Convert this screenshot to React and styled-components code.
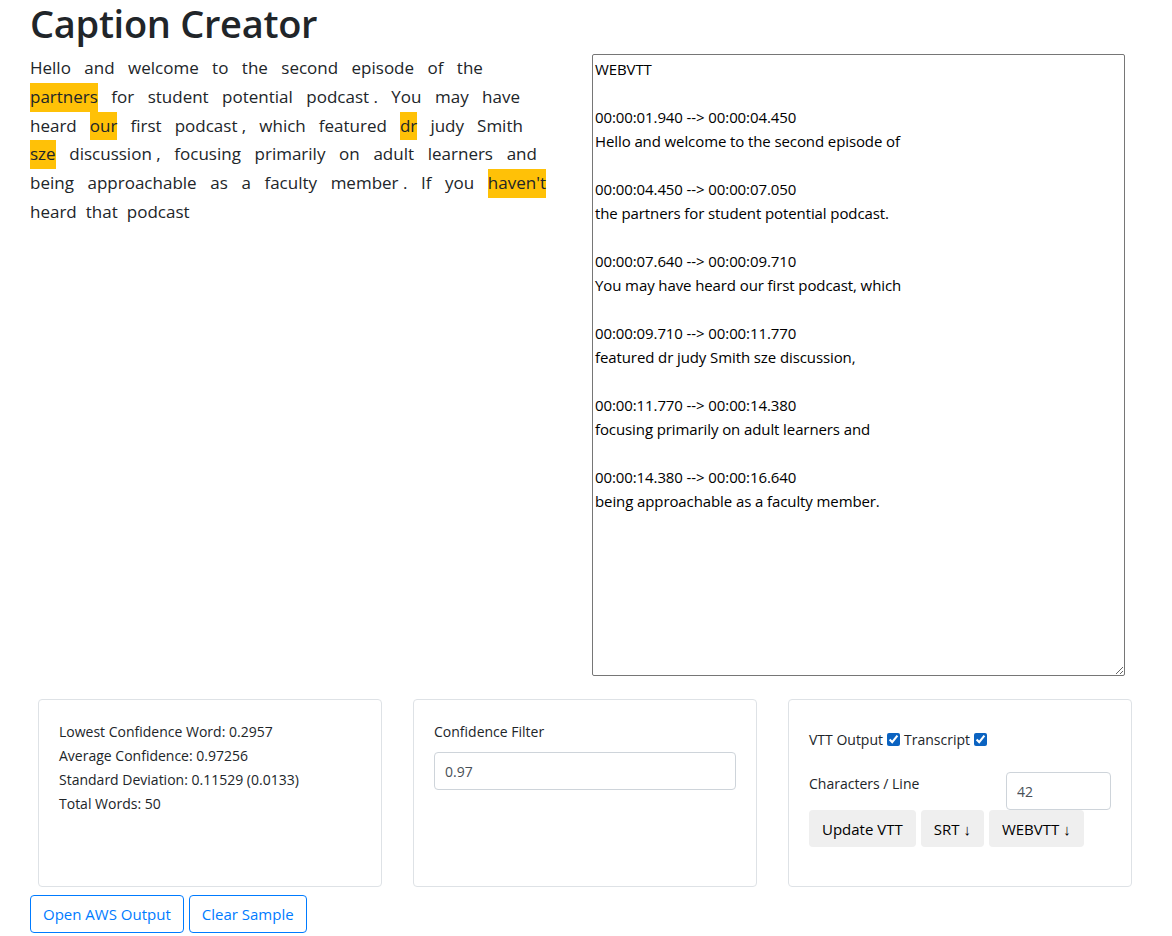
import styled, { createGlobalStyle } from "styled-components";

const Global = createGlobalStyle`
  body { margin: 0; font-family: "Open Sans", "Noto Sans", sans-serif; color: #212529; background: #fff; }
  * { box-sizing: border-box; }
`;

const Page = styled.div`
  padding: 0 30px;
  width: 1172px;
`;

const Title = styled.h1`
  font-size: 38px;
  font-weight: 600;
  margin: 0 0 8px;
  line-height: 46px;
  letter-spacing: -0.3px;
`;

const Scroller = styled.div`
  width: 1110px;
  height: 636px;
  overflow: scroll;
`;

const Inner = styled.div`
  width: 1160px;
  height: 636px;
  display: flex;
  gap: 46px;
`;

const Transcript = styled.div`
  width: 516px;
  font-size: 17px;
  line-height: 28.8px;
`;

const Line = styled.div`
  display: flex;
  justify-content: ${p => (p.$last ? "flex-start" : "space-between")};
  gap: ${p => (p.$last ? "9px" : "0")};
  width: ${p => p.$w}px;
`;

const Word = styled.span`
  background: ${p => (p.$hl ? "#ffc107" : "transparent")};
`;

const Output = styled.textarea`
  width: 533px;
  height: 622px;
  font-family: "Open Sans", "Noto Sans", sans-serif;
  font-size: 15px;
  line-height: 24px;
  padding: 2px 2px;
  border: 1px solid #767676;
  border-radius: 2px;
  color: #000;
  resize: both;
  letter-spacing: -0.1px;
`;

const Cards = styled.div`
  display: flex;
  gap: 31px;
  padding: 9px 8px 0;
`;

const Card = styled.div`
  width: 344px;
  height: 188px;
  border: 1px solid #dee2e6;
  border-radius: 4px;
  padding: ${p => p.$pad || "20px"};
  font-size: 14px;
  line-height: 24px;
`;

const Label = styled.div`
  margin-bottom: 8px;
`;

const Field = styled.input`
  width: ${p => p.$w || "100%"};
  height: 38px;
  border: 1px solid #ced4da;
  border-radius: 4px;
  padding: 6px 10px;
  font: 14px "Open Sans", sans-serif;
  color: #495057;
`;

const Check = styled.input`
  width: 13px;
  height: 13px;
  margin: 0 4px;
  accent-color: #0b63c1;
  vertical-align: -1px;
`;

const Row = styled.div`
  display: flex;
  justify-content: space-between;
  align-items: flex-start;
  margin-top: 20px;
`;

const Buttons = styled.div`
  display: flex;
  gap: 5px;
`;

const Gray = styled.button`
  background: #efefef;
  border: none;
  border-radius: 4px;
  padding: 0 13px;
  height: 37px;
  font: 15px "Open Sans", sans-serif;
  color: #000;
`;

const Actions = styled.div`
  display: flex;
  gap: 5px;
  margin-top: 8px;
`;

const Outline = styled.button`
  background: #fff;
  border: 1px solid #007bff;
  color: #007bff;
  border-radius: 4px;
  height: 38px;
  padding: 0 12px;
  font: 15px "Open Sans", sans-serif;
`;

const vtt = `WEBVTT

00:00:01.940 --> 00:00:04.450
Hello and welcome to the second episode of

00:00:04.450 --> 00:00:07.050
the partners for student potential podcast.

00:00:07.640 --> 00:00:09.710
You may have heard our first podcast, which

00:00:09.710 --> 00:00:11.770
featured dr judy Smith sze discussion,

00:00:11.770 --> 00:00:14.380
focusing primarily on adult learners and

00:00:14.380 --> 00:00:16.640
being approachable as a faculty member.`;

const lines = [
  { w: 453, words: "Hello and welcome to the second episode of the" },
  { w: 490, words: "*partners for student potential podcast. You may have" },
  { w: 493, words: "heard *our first podcast, which featured *dr judy Smith" },
  { w: 507, words: "*sze discussion, focusing primarily on adult learners and" },
  { w: 516, words: "being approachable as a faculty member. If you *haven't" },
  { w: 170, words: "heard that podcast", last: true },
];

export default function App() {
  return (
    <Page>
      <Global />
      <Title>Caption Creator</Title>
      <Scroller>
        <Inner>
          <Transcript>
            {lines.map((l, i) => (
              <Line key={i} $w={l.w} $last={l.last}>
                {l.words.split(" ").map((w, j) => (
                  <Word key={j} $hl={w.startsWith("*")}>
                    {w.replace("*", "").replace(/([.,])$/, " $1")}
                  </Word>
                ))}
              </Line>
            ))}
          </Transcript>
          <Output defaultValue={vtt} />
        </Inner>
      </Scroller>
      <Cards>
        <Card>
          <div>Lowest Confidence Word: 0.2957</div>
          <div>Average Confidence: 0.97256</div>
          <div>Standard Deviation: 0.11529 (0.0133)</div>
          <div>Total Words: 50</div>
        </Card>
        <Card>
          <Label>Confidence Filter</Label>
          <Field defaultValue="0.97" />
        </Card>
        <Card $pad="28px 20px">
          <div>
            VTT Output<Check type="checkbox" defaultChecked />Transcript<Check type="checkbox" defaultChecked />
          </div>
          <Row>
            <span>Characters / Line</span>
            <Field $w="105px" defaultValue="42" />
          </Row>
          <Buttons>
            <Gray>Update VTT</Gray>
            <Gray>SRT ↓</Gray>
            <Gray>WEBVTT ↓</Gray>
          </Buttons>
        </Card>
      </Cards>
      <Actions>
        <Outline>Open AWS Output</Outline>
        <Outline>Clear Sample</Outline>
      </Actions>
    </Page>
  );
}
